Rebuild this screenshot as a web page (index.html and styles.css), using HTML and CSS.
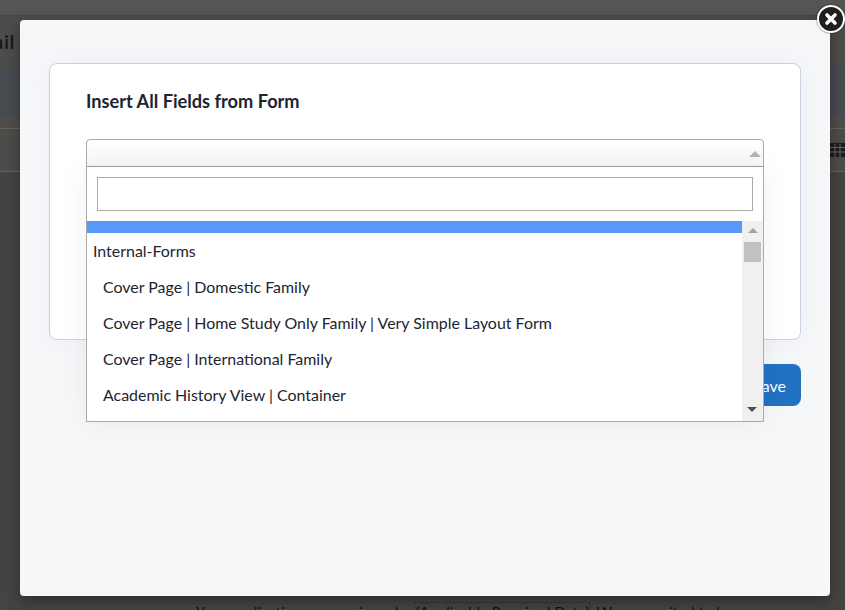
FILE: index.html
```html
<!DOCTYPE html>
<html lang="en">
<head>
<meta charset="utf-8">
<title>Insert All Fields from Form</title>
<link rel="stylesheet" href="styles.css">
</head>
<body>
<div class="page">
  <div class="page-top"></div>
  <div class="page-title">ail</div>
  <div class="page-band"></div>
  <div class="page-row"></div>
  <div class="page-tools">
    <svg class="cal" width="15" height="14" viewBox="0 0 15 14"><rect width="15" height="14" fill="#1d1c1c"/><path d="M0 4.5h15M0 9h15M5 1v13M10 1v13" stroke="#6a6866" stroke-width="1" fill="none"/></svg>
  </div>
  <div class="page-body"></div>
  <p class="page-text">Your application process is under <span class="dotted">(Applicable Required Data)</span>. We are excited to have you</p>
</div>

<div class="modal">
  <button class="close" type="button" aria-label="Close">
    <svg width="14" height="14" viewBox="0 0 14 14"><path d="M3 3l8 8M11 3l-8 8" stroke="#fff" stroke-width="3.6" stroke-linecap="round"/></svg>
  </button>
  <section class="card">
    <h2 class="card-title">Insert All Fields from Form</h2>
    <div class="select">
      <div class="select-head"><span class="tri-up grey"></span></div>
      <div class="select-drop">
        <div class="search-wrap"><input class="search" type="text" aria-label="Search"></div>
        <div class="results">
          <ul class="list">
            <li class="opt-blank"></li>
            <li class="opt group">Internal-Forms</li>
            <li class="opt">Cover Page | Domestic Family</li>
            <li class="opt">Cover Page | Home Study Only Family | Very Simple Layout Form</li>
            <li class="opt">Cover Page | International Family</li>
            <li class="opt">Academic History View | Container</li>
          </ul>
          <div class="scrollbar">
            <span class="tri-up small"></span>
            <span class="thumb"></span>
            <span class="tri-down"></span>
          </div>
        </div>
      </div>
    </div>
  </section>
  <div class="actions"><button class="save" type="button">Save</button></div>
</div>
</body>
</html>
```
FILE: styles.css
```css
* { box-sizing: border-box; }
html, body { margin: 0; height: 100%; }
body {
  width: 845px;
  height: 610px;
  overflow: hidden;
  background: #4e4c4a;
  font-family: Lato, "Open Sans", sans-serif;
  color: #1c2530;
  position: relative;
}

/* dimmed page behind the modal */
.page { height: 610px; overflow: hidden; display: flex; flex-direction: column; }
.page-top { height: 16px; background: #575553; border-bottom: 1px solid #474547; }
.page-title {
  height: 51px;
  padding-top: 15px;
  margin-left: -6px;
  font-size: 18px;
  line-height: 22px;
  font-weight: 700;
  color: #16181c;
  letter-spacing: 1px;
  overflow: hidden;
}
.page-band { height: 50px; background: #484b50; }
.page-row { height: 12px; border-bottom: 1px solid #65635f; background: #504e4c; }
.page-tools {
  height: 43px;
  border-bottom: 1px solid #65635f;
  display: flex;
  justify-content: flex-end;
  align-items: flex-start;
  padding-top: 14px;
}
.cal { display: block; }
.page-body { flex: 1; background: #454443; }
.page-text {
  margin: 0;
  padding-left: 196px;
  height: 7px;
  background: #454443;
  font-size: 15px;
  line-height: 18px;
  color: #111;
  white-space: nowrap;
}
.dotted { outline: 1px dotted #2a2a2a; }

/* modal */
.modal {
  position: absolute;
  left: 20px;
  top: 20px;
  width: 810px;
  height: 576px;
  padding: 43px 29px 0;
  background: #f6f7f9;
  border-radius: 4px;
  box-shadow: 0 5px 15px rgba(0, 0, 0, .35);
}
.close {
  position: absolute;
  right: -15px;
  top: -15px;
  width: 28px;
  height: 28px;
  padding: 0;
  border: 2px solid #fff;
  border-radius: 50%;
  background: #1f1f1f;
  box-shadow: 0 0 2px rgba(0, 0, 0, .7);
  display: flex;
  align-items: center;
  justify-content: center;
}
.close svg { display: block; }

.card {
  height: 277px;
  padding: 26px 36px 0;
  background: #fff;
  border: 1px solid #c6d2e2;
  border-radius: 8px;
  box-shadow: 0 0 24px rgba(200, 210, 225, .18);
}
.card-title {
  margin: 0;
  font-size: 18.2px;
  line-height: 22px;
  font-weight: 700;
  color: #1c2530;
}

.select { position: relative; margin-top: 27px; }
.select-head {
  height: 28px;
  border: 1px solid #aaa;
  border-radius: 4px 4px 0 0;
  background: linear-gradient(#fff, #f8f8f8);
  position: relative;
}
.select-head .tri-up { position: absolute; right: 2px; top: 11px; }
.select-drop {
  position: absolute;
  left: 0;
  right: 0;
  top: 27px;
  height: 256px;
  background: #fff;
  border: 1px solid #aaa;
  border-top-color: #999;
  box-shadow: 0 0 28px rgba(0, 0, 0, .06);
  z-index: 2;
}
.search-wrap { height: 54px; padding: 10px 10px 0; }
.search {
  display: block;
  width: 100%;
  height: 34px;
  border: 1px solid #aaa;
  background: #fff;
  outline: none;
}
.results { display: flex; height: 200px; }
.list {
  flex: 1;
  min-width: 0;
  margin: 0;
  padding: 0;
  list-style: none;
  overflow: hidden;
}
.opt-blank { height: 12px; background: #5897fb; }
.opt {
  height: 36px;
  padding-left: 16px;
  font-size: 15.95px;
  line-height: 36px;
  color: #1c2530;
  white-space: nowrap;
}
.opt.group { padding-left: 6px; }

.scrollbar {
  width: 21px;
  background: #f0f0f0;
  display: flex;
  flex-direction: column;
  align-items: center;
  position: relative;
}
.thumb { display: block; width: 17px; height: 20px; margin-top: 9px; background: #c1c1c1; }
.tri-up, .tri-down { display: block; width: 0; height: 0; border-left: 5px solid transparent; border-right: 5px solid transparent; }
.tri-up { border-bottom: 5px solid #a3a3a3; }
.tri-up.small { margin-top: 7px; }
.tri-up.grey { border-left-width: 6px; border-right-width: 6px; border-bottom: 6px solid #b0b8bf; }
.tri-down { border-top: 5px solid #505050; position: absolute; bottom: 9px; left: 5px; }

.actions { display: flex; justify-content: flex-end; margin-top: 24px; }
.save {
  width: 64px;
  height: 42px;
  padding: 0 15px 0 0;
  border: 0;
  border-radius: 8px;
  background: #2272c3;
  color: #fff;
  font-family: Lato, sans-serif;
  font-size: 16px;
  text-align: right;
}
```
